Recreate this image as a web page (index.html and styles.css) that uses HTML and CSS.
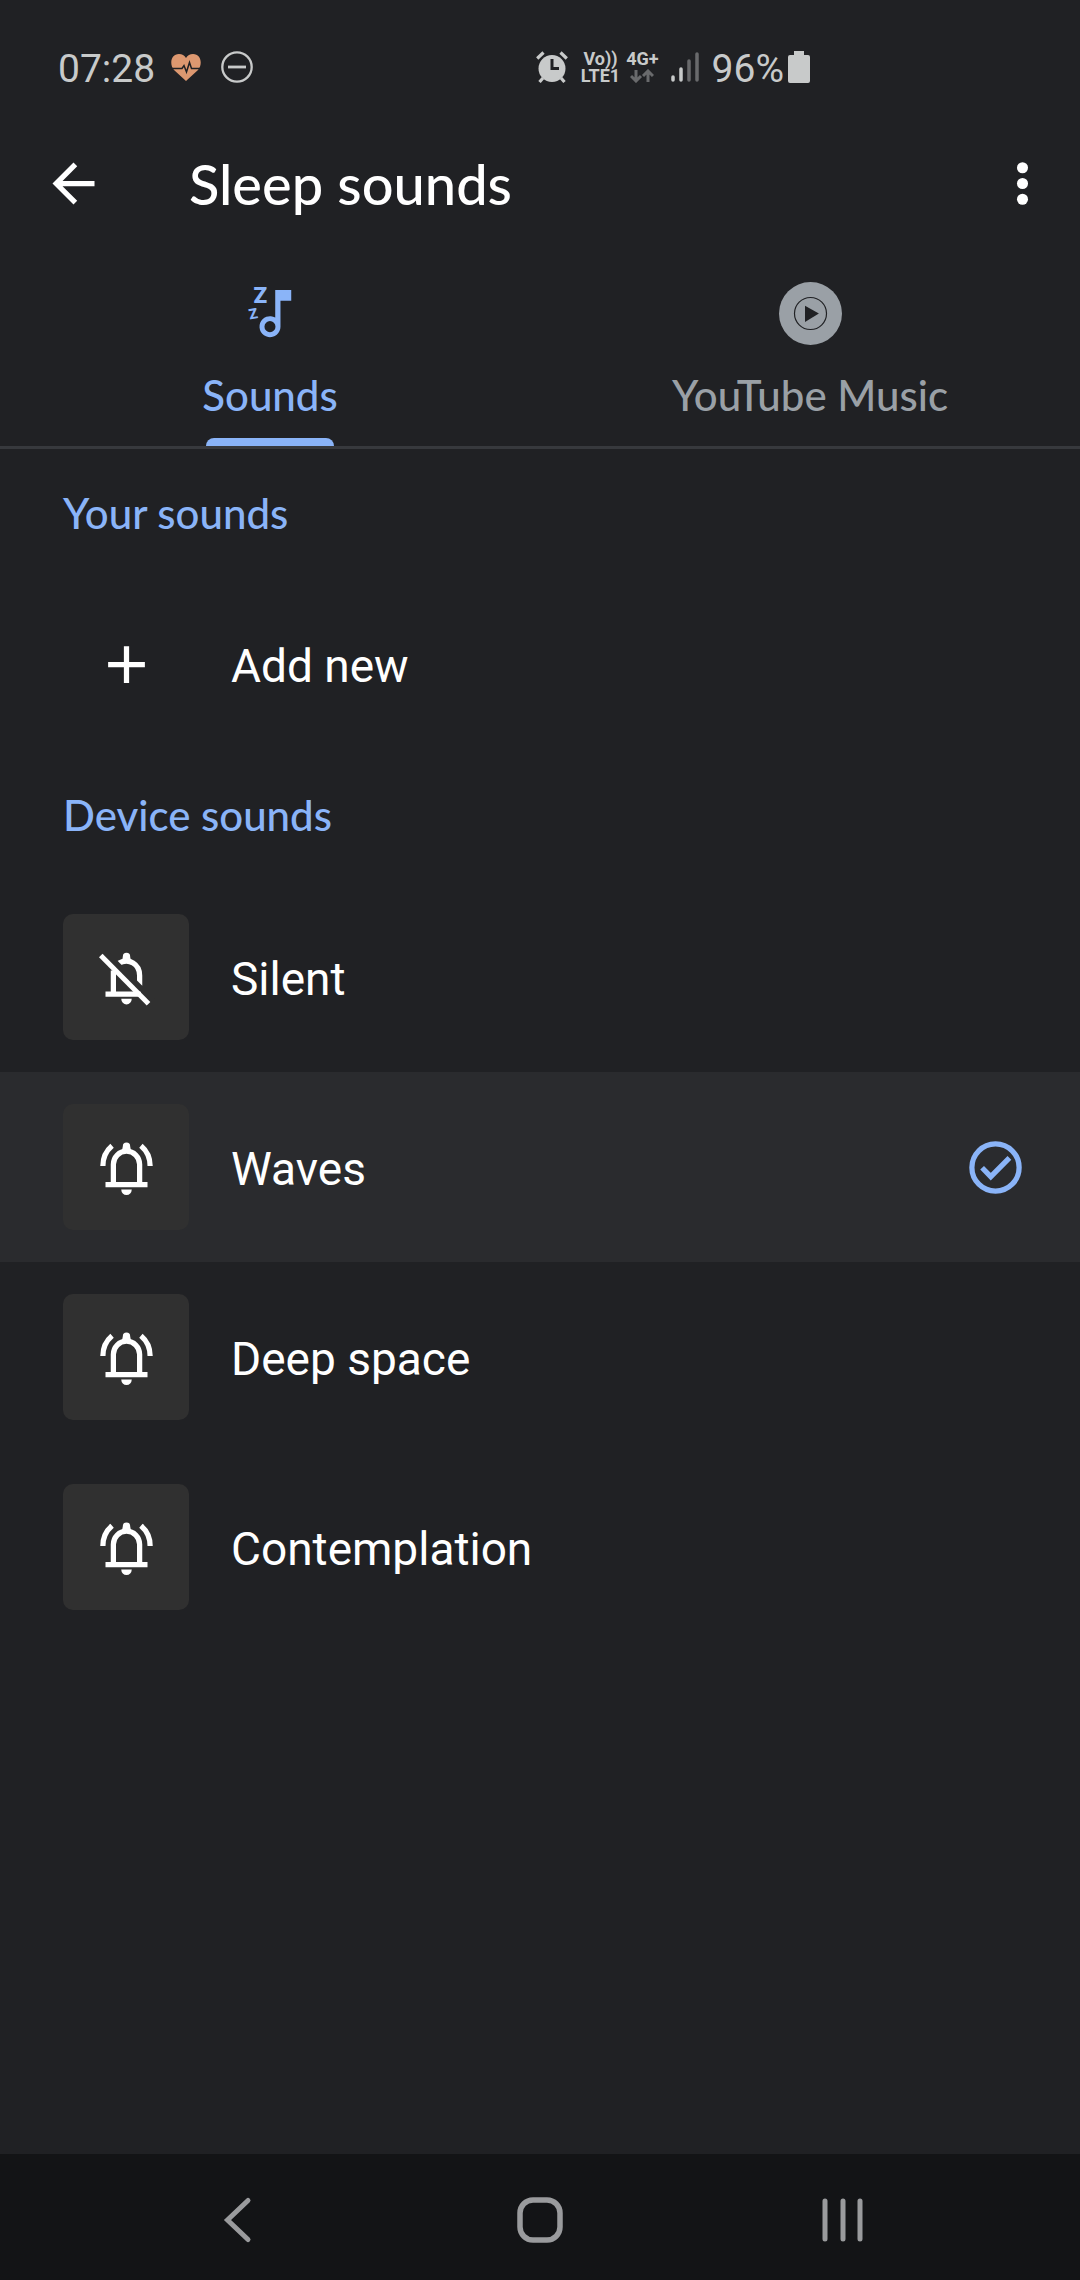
FILE: index.html
```html
<!DOCTYPE html>
<html lang="en">

<head>
    <meta charset="utf-8">
    <title>Sleep sounds</title>
    <link rel="stylesheet" href="styles.css">
</head>

<body>
    <div class="status-bar">
        <span class="time">07:28</span>
        <svg class="heart" viewBox="0 0 30 27">
            <path fill="#dd9870" d="M15 27L3 16C-2 10 0 0 8 0c3 0 5.500 1.500 7 4 1.500-2.500 4-4 7-4 8 0 10 10 5 16z" />
            <path fill="none" stroke="#202124" stroke-width="1.500" d="M0 14.500h11l2-3 2.500 6.500 3-9.500 2 6H30" />
        </svg>
        <svg class="dnd" viewBox="0 0 32 32" fill="none" stroke="#c8caca">
            <circle cx="16" cy="16" r="14.700" stroke-width="2.300" />
            <path d="M7 16h18" stroke-width="2.800" />
        </svg>

        <div class="status-right">
            <svg class="alarm" viewBox="0 0 32 32">
                <circle cx="16" cy="17.500" r="13.500" fill="#c8caca" />
                <path fill="none" stroke="#c8caca" stroke-width="3.200" d="M1.200 7.500L7.500 1.500M30.800 7.500L24.500 1.500M7 27l-3.500 4M25 27l3.500 4" />
                <path fill="none" stroke="#202124" stroke-width="3" d="M16 8v9.500h7" />
            </svg>
            <div class="network">
                <span>Vo))</span>
                <span>LTE1</span>
            </div>
            <div class="network">
                <span>4G+</span>
                <svg class="data" viewBox="0 0 24 14" fill="none" stroke="#696a6c" stroke-width="3">
                    <path d="M6 1v11M1 7l5 5 5-5M18 13V2M13 7l5-5 5 5" />
                </svg>
            </div>
            <svg class="signal" viewBox="0 0 28 32" stroke-width="3.500" stroke-linecap="round">
                <path stroke="#c8caca" d="M2 26v3M10 18v11" />
                <path stroke="#696a6c" d="M18 10v19M26 3v26" />
            </svg>
            <span class="percent">96%</span>
            <svg class="battery" viewBox="0 0 22 32" fill="#c8caca">
                <path d="M6 0h10v4h4q2 0 2 2v24q0 2-2 2H2q-2 0-2-2V6q0-2 2-2h4z" />
            </svg>
        </div>
    </div>

    <header class="toolbar">
        <button class="icon-button" aria-label="Back">
            <svg class="icon" viewBox="0 0 24 24">
                <path d="M20 11H7.830l5.590-5.590L12 4l-8 8 8 8 1.410-1.410L7.830 13H20z" />
            </svg>
        </button>
        <h1>Sleep sounds</h1>
        <button class="icon-button" aria-label="More options">
            <svg class="icon" viewBox="0 0 24 24">
                <circle cx="12" cy="6" r="2.100" />
                <circle cx="12" cy="12" r="2.100" />
                <circle cx="12" cy="18" r="2.100" />
            </svg>
        </button>
    </header>

    <div class="tabs" role="tablist">
        <button class="tab active" role="tab" aria-selected="true">
            <svg class="icon" viewBox="0 0 24 24">
                <path d="M13.800 3h6.100v4.100h-4.100V17a4 4 0 1 1-2-3.450zM11.800 14.900a2.100 2.100 0 1 0 0 4.200 2.100 2.100 0 1 0 0-4.200z" fill-rule="evenodd" />
                <text class="zed" x="5.500" y="8" font-size="8.500">Z</text>
                <text class="zed" x="4" y="14.300" font-size="5.500" transform="rotate(-10 4 14)">Z</text>
            </svg>
            <span>Sounds</span>
        </button>
        <button class="tab" role="tab" aria-selected="false">
            <svg class="icon" viewBox="0 0 24 24">
                <circle cx="12" cy="12" r="12" />
                <circle cx="12" cy="12" r="6.100" fill="none" stroke="#202124" stroke-width=".45" />
                <path fill="#202124" d="M9.900 9v6.200l5.300-3.200z" />
            </svg>
            <span>YouTube Music</span>
        </button>
    </div>

    <main class="content">
        <h2>Your sounds</h2>
        <button class="row">
            <span class="tile plain">
                <svg class="icon" viewBox="0 0 24 24">
                    <path d="M11 5h2v6h6v2h-6v6h-2v-6H5v-2h6z" />
                </svg>
            </span>
            <span class="name">Add new</span>
        </button>

        <h2>Device sounds</h2>
        <div class="sounds">
            <label class="row">
                <input type="radio" name="sound">
                <span class="tile">
                    <svg class="icon" viewBox="0 0 24 24">
                        <path fill="none" stroke="#fff" stroke-width="2" d="M7 9.300v9M4 18.300h13.500M9 6.600C13 4.300 17 7 17 11.200v3.900" />
                        <path d="M10.400 5.500l.2-1.500a1.400 1.400 0 0 1 2.800 0l.2 1.500zM10 20.100h4a2 2.200 0 0 1-4 0z" />
                        <path fill="none" stroke="#303030" stroke-width="2" d="M3.800 2.200L22 20.600" />
                        <path fill="none" stroke="#fff" stroke-width="1.900" d="M2.200 3.600l18.200 18.400" />
                    </svg>
                </span>
                <span class="name">Silent</span>
                <svg class="check" viewBox="0 0 24 24">
                    <circle cx="12" cy="12" r="9" />
                    <path d="M6.900 12.100l3.300 3.400 7.100-7.200" />
                </svg>
            </label>
            <label class="row">
                <input type="radio" name="sound" checked>
                <span class="tile">
                    <svg class="icon" viewBox="0 0 24 24">
                        <path fill="none" stroke="#fff" stroke-width="2" d="M4 18.500h16M7 18v-7.200a5 5 0 0 1 10 0V18M3 11.400c0-3.300 1.500-6 3.500-7.700M21 11.400c0-3.300-1.500-6-3.500-7.700" />
                        <path d="M10.300 5.500l.3-1.600a1.400 1.400 0 0 1 2.800 0l.3 1.600zM10 20.400h4a2 2.100 0 0 1-4 0z" />
                    </svg>
                </span>
                <span class="name">Waves</span>
                <svg class="check" viewBox="0 0 24 24">
                    <circle cx="12" cy="12" r="9" />
                    <path d="M6.900 12.100l3.300 3.400 7.100-7.200" />
                </svg>
            </label>
            <label class="row">
                <input type="radio" name="sound">
                <span class="tile">
                    <svg class="icon" viewBox="0 0 24 24">
                        <path fill="none" stroke="#fff" stroke-width="2" d="M4 18.500h16M7 18v-7.200a5 5 0 0 1 10 0V18M3 11.400c0-3.300 1.500-6 3.500-7.700M21 11.400c0-3.300-1.500-6-3.500-7.700" />
                        <path d="M10.300 5.500l.3-1.600a1.400 1.400 0 0 1 2.800 0l.3 1.600zM10 20.400h4a2 2.100 0 0 1-4 0z" />
                    </svg>
                </span>
                <span class="name">Deep space</span>
                <svg class="check" viewBox="0 0 24 24">
                    <circle cx="12" cy="12" r="9" />
                    <path d="M6.900 12.100l3.300 3.400 7.100-7.200" />
                </svg>
            </label>
            <label class="row">
                <input type="radio" name="sound">
                <span class="tile">
                    <svg class="icon" viewBox="0 0 24 24">
                        <path fill="none" stroke="#fff" stroke-width="2" d="M4 18.500h16M7 18v-7.200a5 5 0 0 1 10 0V18M3 11.400c0-3.300 1.500-6 3.500-7.700M21 11.400c0-3.300-1.500-6-3.500-7.700" />
                        <path d="M10.300 5.500l.3-1.600a1.400 1.400 0 0 1 2.800 0l.3 1.600zM10 20.400h4a2 2.100 0 0 1-4 0z" />
                    </svg>
                </span>
                <span class="name">Contemplation</span>
                <svg class="check" viewBox="0 0 24 24">
                    <circle cx="12" cy="12" r="9" />
                    <path d="M6.900 12.100l3.300 3.400 7.100-7.200" />
                </svg>
            </label>
        </div>
    </main>

    <nav class="nav-bar">
        <button aria-label="Back">
            <svg viewBox="0 0 48 48"><path d="M34 4.500L13.500 24 34 43.500" /></svg>
        </button>
        <button aria-label="Home">
            <svg viewBox="0 0 48 48"><rect x="4" y="4" width="40" height="40" rx="13" stroke-width="5.500" /></svg>
        </button>
        <button aria-label="Recent apps">
            <svg viewBox="0 0 48 48"><path d="M7 5v38M25 5v38M42 5v38" /></svg>
        </button>
    </nav>
</body>

</html>
```
FILE: styles.css
```css
* {
    box-sizing: border-box;
}

body {
    margin: 0;
    min-height: 100vh;
    display: flex;
    flex-direction: column;
    background: #202124;
    color: #fff;
    font-family: Roboto, "Liberation Sans", sans-serif;
}

button {
    margin: 0;
    padding: 0;
    border: 0;
    background: none;
    color: inherit;
    font: inherit;
    cursor: pointer;
}

svg {
    display: block;
    flex: none;
}

.icon {
    width: 63px;
    height: 63px;
    fill: currentColor;
}

/* status bar */
.status-bar {
    display: flex;
    align-items: center;
    height: 110px;
    padding: 24px 270px 0 58px;
    color: #c8caca;
    font-size: 39px;
    line-height: 48px;
}

.time,
.percent {
    padding-top: 3px;
}

.heart {
    width: 30px;
    height: 27px;
    margin-left: 16px;
}

.dnd {
    width: 32px;
    height: 32px;
    margin-left: 20px;
}

.status-right {
    display: flex;
    align-items: center;
    margin-left: auto;
}

.alarm {
    width: 32px;
    height: 32px;
    margin-right: 13px;
}

.network {
    display: flex;
    flex-direction: column;
    align-items: center;
    height: 34px;
    margin-right: 6px;
    font-size: 18px;
    font-weight: 700;
    line-height: 17px;
}

.data {
    width: 24px;
    height: 14px;
    margin-top: 2px;
}

.signal {
    width: 28px;
    height: 32px;
    margin: 0 13px 0 6px;
}

.battery {
    width: 22px;
    height: 32px;
    margin-left: 4px;
}

/* toolbar */
.toolbar {
    display: flex;
    align-items: center;
    height: 147px;
    padding: 0 26px 0 42px;
}

.toolbar h1 {
    flex: 1;
    margin: 0 0 0 84px;
    font-family: Lato, sans-serif;
    font-size: 56px;
    font-weight: 500;
    line-height: 64px;
}

/* tabs */
.tabs {
    display: flex;
    border-bottom: 3px solid #37393d;
}

.tab {
    position: relative;
    flex: 1;
    display: flex;
    flex-direction: column;
    align-items: center;
    gap: 26px;
    height: 189px;
    padding-top: 25px;
    color: #9aa0a6;
    font-family: Lato, sans-serif;
    font-size: 42px;
    font-weight: 500;
    line-height: 48px;
}

.tab.active {
    color: #8ab4f8;
}

.tab.active::after {
    content: "";
    position: absolute;
    bottom: 0;
    width: 128px;
    height: 8px;
    border-radius: 8px 8px 0 0;
    background: #8ab4f8;
}

.zed {
    font-family: Roboto, sans-serif;
    font-weight: 900;
}

/* list */
.content {
    flex: 1;
    padding-top: 8px;
}

.content h2 {
    margin: 0;
    padding: 0 63px;
    color: #8ab4f8;
    font-family: Lato, sans-serif;
    font-size: 42px;
    font-weight: 500;
    line-height: 112px;
}

.sounds {
    margin-top: 11px;
}

.row {
    display: flex;
    align-items: center;
    width: 100%;
    height: 190px;
    padding: 0 53px 0 63px;
    cursor: pointer;
}

.row:has(input:checked) {
    background: #2a2b2e;
}

.row input {
    position: absolute;
    opacity: 0;
}

.tile {
    display: flex;
    align-items: center;
    justify-content: center;
    width: 126px;
    height: 126px;
    margin-right: 42px;
    border-radius: 10px;
    background: #303030;
}

.tile.plain {
    background: none;
}

.name {
    flex: 1;
    padding-top: 4px;
    font-size: 46px;
    line-height: 56px;
    text-align: left;
}

.check {
    display: none;
    width: 63px;
    height: 63px;
    fill: none;
    stroke: #8ab4f8;
    stroke-width: 2;
}

.row input:checked ~ .check {
    display: block;
}

/* system navigation */
.nav-bar {
    display: grid;
    grid-template-columns: repeat(3, 1fr);
    height: 126px;
    padding: 6px 8% 0;
    background: #131416;
}

.nav-bar button {
    display: flex;
    align-items: center;
    justify-content: center;
}

.nav-bar svg {
    width: 48px;
    height: 48px;
    fill: none;
    stroke: #9a9b9d;
    stroke-width: 5;
    stroke-linecap: round;
}
```
